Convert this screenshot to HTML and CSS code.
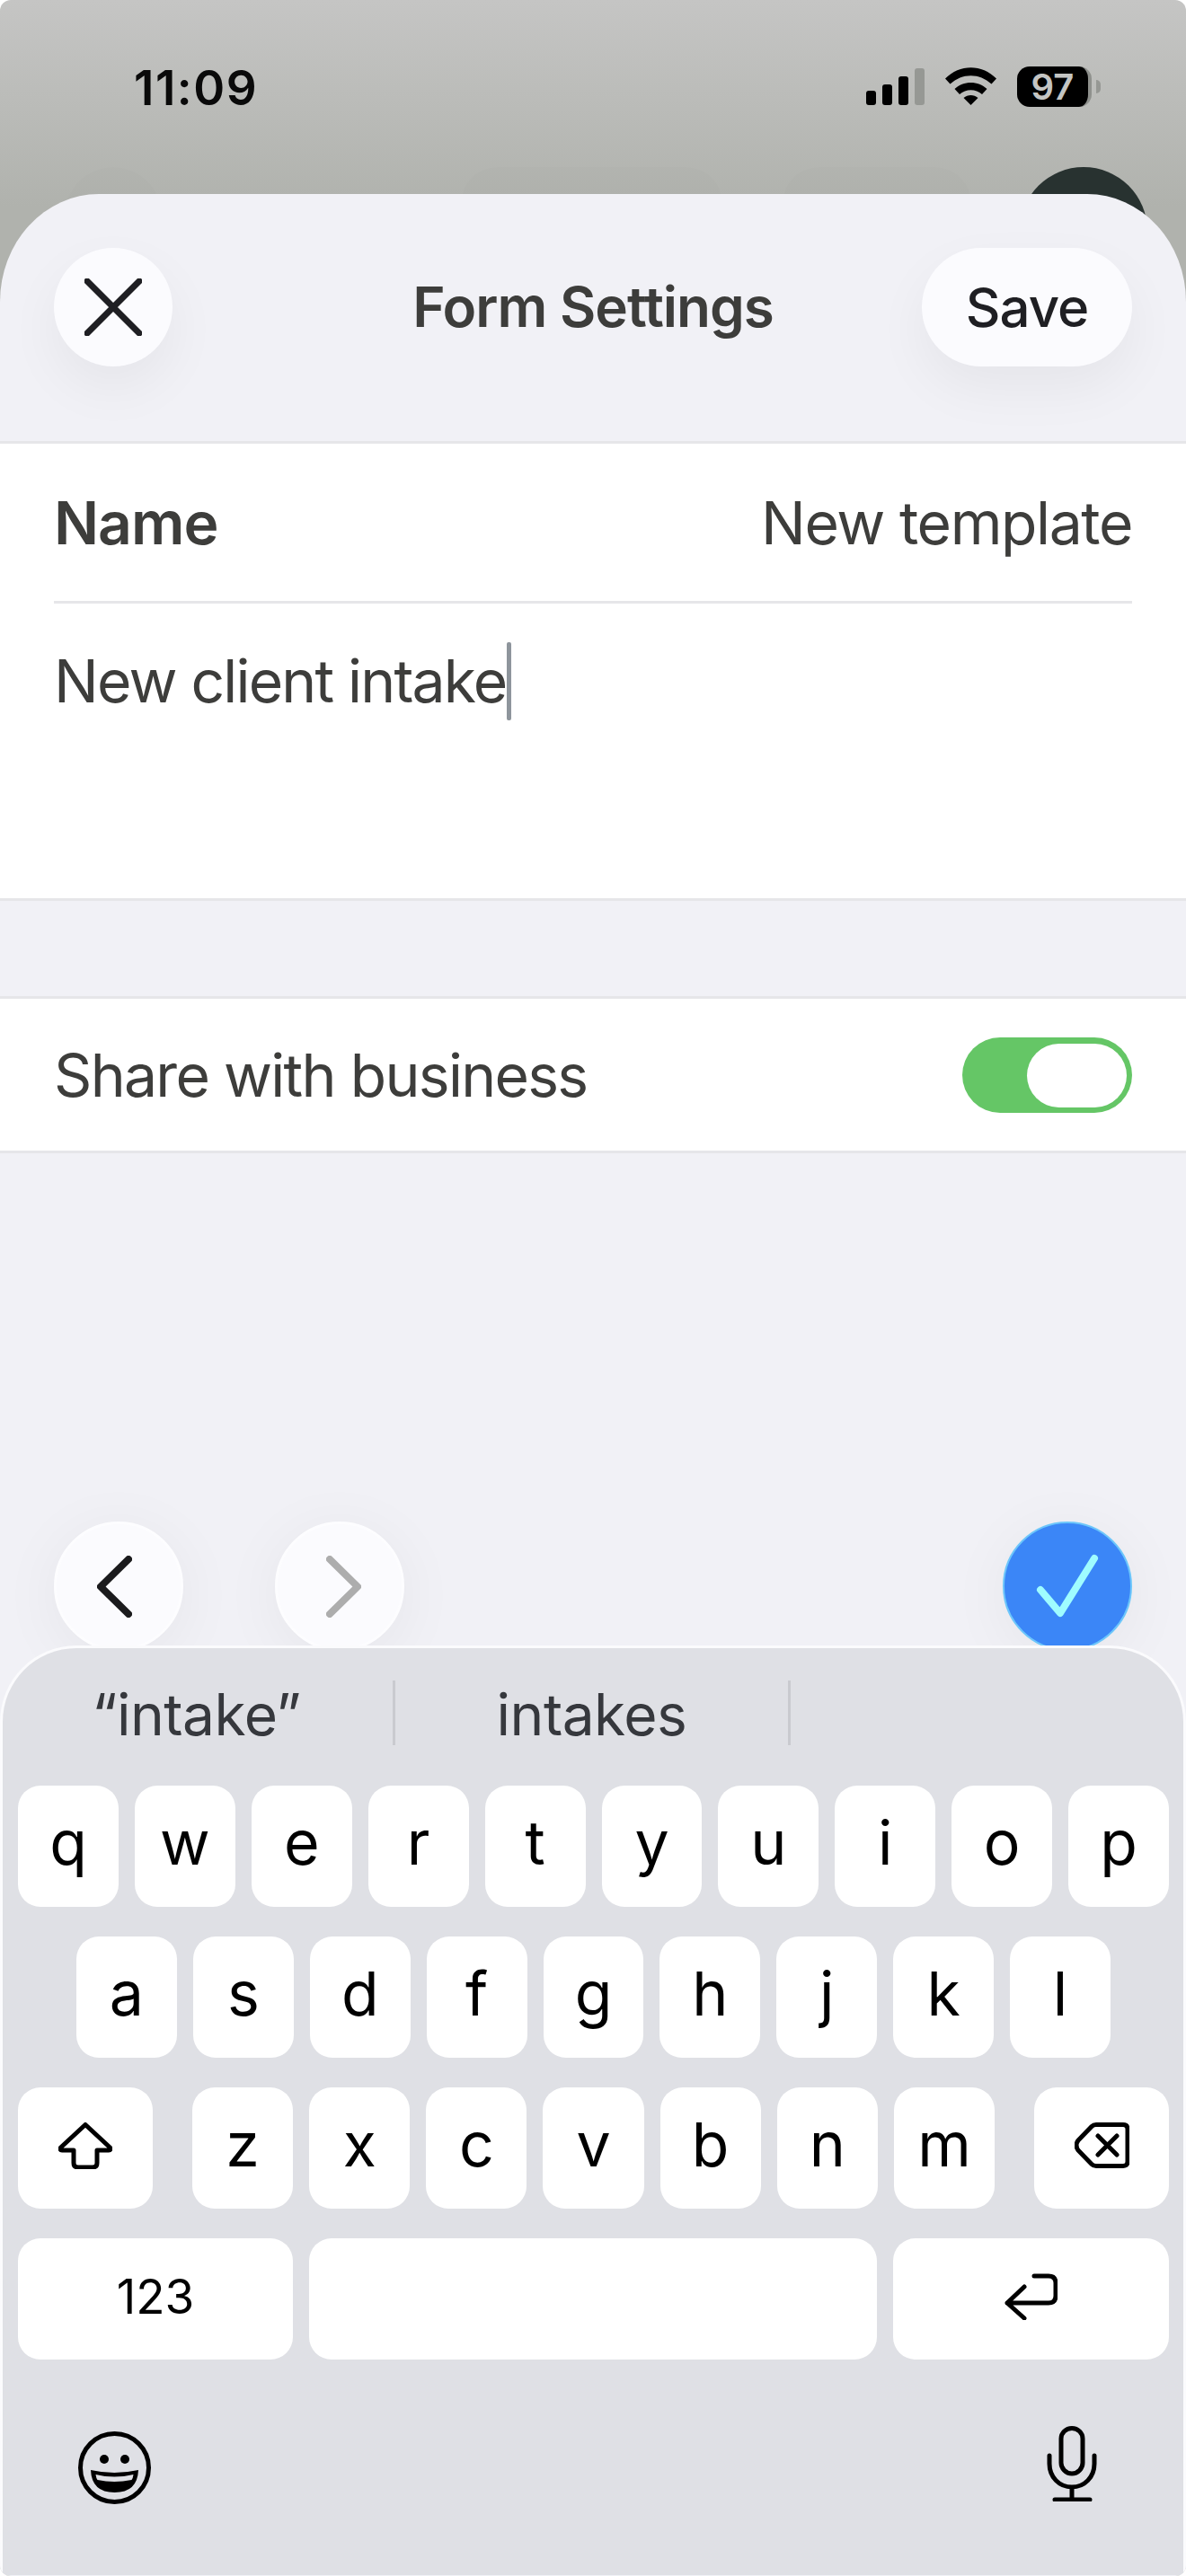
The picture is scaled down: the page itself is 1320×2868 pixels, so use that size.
FILE: index.html
```html
<!DOCTYPE html>
<html lang="en">
<head>
    <meta charset="UTF-8">
    <meta name="viewport" content="width=device-width, initial-scale=1.0">
    <title>Form Settings</title>
    <link rel="stylesheet" href="styles.css">
</head>
<body>
    <div class="screen">
        <div class="status-bar">
            <span class="time">11:09</span>
            <div class="status-icons">
                <div class="signal">
                    <i class="bar bar-1"></i><i class="bar bar-2"></i><i class="bar bar-3"></i><i class="bar bar-4"></i>
                </div>
                <svg class="wifi" width="57" height="42" viewBox="0 0 57 42">
                    <path d="M0 12.5 C16 -4 41 -4 57 12.5 L51.5 18.5 C38 6 19 6 5.500 18.500Z"/>
                    <path d="M10.500 24 C20 14.500 37 14.500 46.500 24 L41 30 C34 23.500 23 23.500 16 30Z"/>
                    <path d="M20.500 34 C25 30 32 30 36.500 34 L28.500 42Z"/>
                </svg>
                <div class="battery">
                    <div class="battery-body">97</div>
                    <div class="battery-nub"></div>
                </div>
            </div>
        </div>

        <div class="behind">
            <div class="ghost ghost-a"></div>
            <div class="ghost ghost-b"></div>
            <div class="ghost ghost-c"></div>
            <div class="avatar"></div>
        </div>

        <div class="sheet">
            <div class="header">
                <button class="round-btn close-btn">
                    <svg width="64" height="64" viewBox="0 0 64 64"><path class="close-x" d="M3 3 L61 61 M61 3 L3 61"/></svg>
                </button>
                <div class="title">Form Settings</div>
                <button class="save-btn">Save</button>
            </div>

            <div class="section">
                <div class="name-row">
                    <span class="name-label">Name</span>
                    <span class="name-value">New template</span>
                </div>
                <div class="note">New client intake<span class="caret"></span></div>
            </div>

            <div class="section share-row">
                <span class="share-label">Share with business</span>
                <div class="toggle"><div class="thumb"></div></div>
            </div>

            <div class="nav-row">
                <div class="nav-arrows">
                    <button class="round-btn nav-btn">
                        <svg class="chev-left" width="39" height="69" viewBox="0 0 39 69"><path class="chev chev-on" d="M35 4 L4 34.500 L35 65"/></svg>
                    </button>
                    <button class="round-btn nav-btn">
                        <svg class="chev-right" width="39" height="69" viewBox="0 0 39 69"><path class="chev chev-off" d="M4 4 L35 34.500 L4 65"/></svg>
                    </button>
                </div>
                <button class="done-btn">
                    <svg width="70" height="72" viewBox="0 0 70 72"><path class="check" d="M5 40 L27 66 L65 5"/></svg>
                </button>
            </div>

            <div class="keyboard">
                <div class="suggestions">
                    <div class="suggestion">“intake”</div>
                    <div class="suggestion">intakes</div>
                    <div class="suggestion last"></div>
                </div>

                <div class="key-row">
                    <div class="key">q</div><div class="key">w</div><div class="key">e</div><div class="key">r</div><div class="key">t</div><div class="key">y</div><div class="key">u</div><div class="key">i</div><div class="key">o</div><div class="key">p</div>
                </div>
                <div class="key-row row-two">
                    <div class="key">a</div><div class="key">s</div><div class="key">d</div><div class="key">f</div><div class="key">g</div><div class="key">h</div><div class="key">j</div><div class="key">k</div><div class="key">l</div>
                </div>
                <div class="key-row row-three">
                    <div class="key key-side">
                        <svg width="60" height="52" viewBox="0 0 60 52"><path class="kb-line" d="M30 2.500 L2.500 28 Q1 31 4 31 H17 V45 Q17 50 22 50 H38 Q43 50 43 45 V31 H56 Q59 31 57.500 28Z"/></svg>
                    </div>
                    <div class="letters">
                        <div class="key">z</div><div class="key">x</div><div class="key">c</div><div class="key">v</div><div class="key">b</div><div class="key">n</div><div class="key">m</div>
                    </div>
                    <div class="key key-side">
                        <svg width="61" height="51" viewBox="0 0 61 51"><path class="kb-line" d="M24 2.500 H54 Q59 2.500 59 7.500 V43.500 Q59 48.500 54 48.500 H24 Q21 48.500 19 46.500 L4 31 Q0 25.500 4 20 L19 4.500 Q21 2.500 24 2.500Z M26 15 L47 36 M47 15 L26 36"/></svg>
                    </div>
                </div>
                <div class="key-row">
                    <div class="key key-wide key-123">123</div>
                    <div class="key key-space"></div>
                    <div class="key key-wide key-return">
                        <svg width="59" height="52" viewBox="0 0 59 52"><path class="kb-line" d="M33 3 H49 Q57 3 57 11 V25 Q57 33 49 33 H3 M22 15 L3 33 L22 50"/></svg>
                    </div>
                </div>

                <div class="kb-bottom">
                    <svg width="81" height="81" viewBox="0 0 81 81">
                        <circle class="emoji-face" cx="40.500" cy="40.500" r="38"/>
                        <circle cx="29" cy="31" r="5"/>
                        <circle cx="52" cy="31" r="5"/>
                        <path d="M14 43 Q40 49 67 43 Q66 68 40.500 68 Q15 68 14 43Z"/>
                        <path class="emoji-teeth" d="M19.500 48 Q40 53 61.500 48 Q61 52 59.500 54 Q40 58 21.500 54 Q20 52 19.500 48Z"/>
                    </svg>
                    <svg class="mic" width="56" height="84" viewBox="0 0 56 84"><path class="kb-line" d="M28 2.500 C35 2.500 40 8 40 14 V41 C40 47 35 53 28 53 C21 53 16 47 16 41 V14 C16 8 21 2.500 28 2.500Z M3 33 V42 C3 57 14 68 28 68 C42 68 53 57 53 42 V33 M28 68 V82 M9 82 H48"/></svg>
                </div>
            </div>
        </div>
    </div>
</body>
</html>
```

FILE: styles.css
```css
* {
    box-sizing: border-box;
}

body {
    margin: 0;
    padding: 0;
    background-color: white;
    font-family: Inter, "Liberation Sans", sans-serif;
}

button {
    font-family: inherit;
    padding: 0;
    border: none;
}

.screen {
    width: 1320px;
    height: 2868px;
    overflow: hidden;
    border-radius: 12px;
    background: linear-gradient(#c5c5c4, #b0b2ad 230px);
}

/* status bar */
.status-bar {
    height: 186px;
    padding: 66px 95px 0 149px;
    display: flex;
    justify-content: space-between;
    align-items: flex-start;
}

.time {
    font-size: 53px;
    line-height: 64px;
    font-weight: 600;
    letter-spacing: 1.5px;
    color: #0a0a0a;
}

.status-icons {
    display: flex;
    align-items: flex-start;
    padding-top: 8px;
}

.signal {
    display: flex;
    align-items: flex-end;
    gap: 7px;
    height: 41px;
    margin-top: 2px;
    margin-right: 23px;
}

.bar {
    display: block;
    width: 11px;
    background-color: black;
    border-radius: 3px;
}

.bar-1 { height: 16px; }
.bar-2 { height: 23px; }
.bar-3 { height: 32px; }
.bar-4 { height: 41px; background-color: #969894; }

.wifi {
    margin-top: 1px;
    margin-right: 23px;
}

.battery {
    display: flex;
    align-items: center;
    gap: 5px;
}

.battery-body {
    width: 83px;
    height: 45px;
    border-radius: 14px;
    background-color: black;
    border-right: 4px solid #8f918d;
    color: #c4c5c3;
    font-size: 40px;
    font-weight: 600;
    line-height: 45px;
    text-align: center;
}

.battery-nub {
    width: 5px;
    height: 15px;
    border-radius: 0 8px 8px 0;
    background-color: #969894;
}

/* what shows above the sheet */
.behind {
    height: 30px;
    padding-left: 72px;
    display: flex;
}

.ghost {
    height: 120px;
    border-radius: 40px;
    background-color: rgba(0, 0, 0, 0.006);
}

.ghost-a { width: 108px; border-radius: 54px; margin-right: 333px; }
.ghost-b { width: 291px; margin-right: 67px; }
.ghost-c { width: 210px; margin-right: 54px; }

.avatar {
    width: 142px;
    height: 142px;
    border-radius: 50%;
    background-color: #283230;
}

/* sheet */
.sheet {
    position: relative;
    z-index: 1;
    height: 2652px;
    border-radius: 110px 110px 0 0 / 120px 120px 0 0;
    background-color: #f1f1f6;
    overflow: hidden;
}

.header {
    height: 275px;
    padding: 60px 60px 0;
    display: grid;
    grid-template-columns: 1fr auto 1fr;
    align-items: start;
}

.round-btn {
    display: flex;
    align-items: center;
    justify-content: center;
    border-radius: 50%;
    background-color: #fbfbfe;
    box-shadow: 0 24px 60px rgba(0, 0, 0, 0.05);
}

.close-btn {
    width: 132px;
    height: 132px;
}

.close-x {
    fill: none;
    stroke: #1f1f23;
    stroke-width: 7;
    stroke-linecap: round;
}

.title {
    font-size: 62px;
    line-height: 132px;
    font-weight: 600;
    letter-spacing: -1px;
    color: #3d3d3b;
}

.save-btn {
    justify-self: end;
    width: 234px;
    height: 132px;
    border-radius: 66px;
    background-color: #fbfbfe;
    box-shadow: 0 24px 60px rgba(0, 0, 0, 0.05);
    font-size: 60px;
    font-weight: 500;
    letter-spacing: -1px;
    color: #1f1f23;
}

.section {
    background-color: white;
    border-top: 3px solid #e6e6e9;
    border-bottom: 3px solid #e6e6e9;
}

.name-row {
    margin: 0 60px;
    height: 178px;
    border-bottom: 3px solid #e6e6e9;
    display: flex;
    justify-content: space-between;
    align-items: center;
    color: #3d3d3b;
    font-size: 66px;
    letter-spacing: -1.400px;
}

.name-label {
    font-weight: 600;
    letter-spacing: -1px;
}

.note {
    height: 328px;
    padding: 41px 60px 0;
    display: flex;
    align-items: flex-start;
    font-size: 66px;
    line-height: 90px;
    letter-spacing: -1.800px;
    color: #3d3d3b;
}

.caret {
    width: 5px;
    height: 87px;
    margin-top: 2px;
    margin-left: 1px;
    background-color: #8e959c;
    border-radius: 2px;
}

.share-row {
    margin-top: 106px;
    height: 175px;
    padding: 0 60px;
    display: flex;
    justify-content: space-between;
    align-items: center;
}

.share-label {
    font-size: 66px;
    letter-spacing: -1.700px;
    color: #3d3d3b;
}

.toggle {
    width: 189px;
    height: 84px;
    padding: 7px 6px;
    border-radius: 42px;
    background-color: #65c666;
    display: flex;
    justify-content: flex-end;
}

.thumb {
    width: 111px;
    height: 71px;
    border-radius: 36px;
    background-color: white;
}

/* prev, next and done buttons */
.nav-row {
    margin-top: 410px;
    padding: 0 60px;
    display: flex;
    justify-content: space-between;
}

.nav-arrows {
    display: flex;
    gap: 102px;
}

.nav-btn {
    width: 144px;
    height: 144px;
    border: 3px solid #fdfdff;
    box-shadow: 0 10px 70px rgba(0, 0, 0, 0.05);
}

.chev-left {
    margin-right: 10px;
}

.chev-right {
    margin-left: 8px;
}

.chev {
    fill: none;
    stroke-width: 8;
    stroke-linecap: round;
    stroke-linejoin: round;
}

.chev-on { stroke: #1b1b1d; }
.chev-off { stroke: #adadad; }

.done-btn {
    width: 144px;
    height: 144px;
    border-radius: 50%;
    background-color: #3b86f7;
    border: 2px solid #6cc6fb;
    box-shadow: 0 10px 70px rgba(0, 0, 0, 0.05);
    display: flex;
    align-items: center;
    justify-content: center;
}

.check {
    fill: none;
    stroke: #9ffcff;
    stroke-width: 8;
    stroke-linecap: round;
    stroke-linejoin: round;
}

/* keyboard */
.keyboard {
    position: relative;
    margin-top: -6px;
    height: 1035px;
    padding: 36px 16px 0 17px;
    border: 3px solid #fbfbfd;
    border-bottom: none;
    border-radius: 85px 85px 0 0;
    background-color: #dfe0e5;
}

.suggestions {
    display: flex;
    height: 72px;
    margin: 0 -19px 45px -20px;
}

.suggestion {
    width: 440px;
    border-right: 3px solid #c9cacf;
    text-align: center;
    font-size: 64px;
    line-height: 76px;
    letter-spacing: -0.500px;
    color: #36383d;
}

.suggestion.last {
    border-right: none;
}

.key-row,
.letters {
    display: flex;
    gap: 18px;
}

.key-row {
    margin-bottom: 33px;
}

.letters {
    flex: 1;
}

.key {
    flex: 1;
    height: 135px;
    display: flex;
    align-items: center;
    justify-content: center;
    padding-bottom: 10px;
    border-radius: 25px;
    background-color: white;
    font-size: 68px;
    color: black;
}

.row-two {
    padding: 0 65px;
}

.row-three {
    gap: 44px;
}

.key-side {
    flex: none;
    width: 150px;
    padding-bottom: 6px;
}

.key-wide {
    flex: none;
    width: 306px;
    padding-bottom: 6px;
}

.key-return {
    width: 307px;
}

.key-123 {
    font-size: 53px;
}

.kb-line {
    fill: none;
    stroke: black;
    stroke-width: 5;
    stroke-linecap: round;
    stroke-linejoin: round;
}

.kb-bottom {
    padding: 47px 80px 0 67px;
    display: flex;
    justify-content: space-between;
    align-items: flex-start;
}

.mic {
    margin-top: -6px;
}

.emoji-face {
    fill: none;
    stroke: black;
    stroke-width: 5;
}

.emoji-teeth {
    fill: #dfe0e5;
}
```
